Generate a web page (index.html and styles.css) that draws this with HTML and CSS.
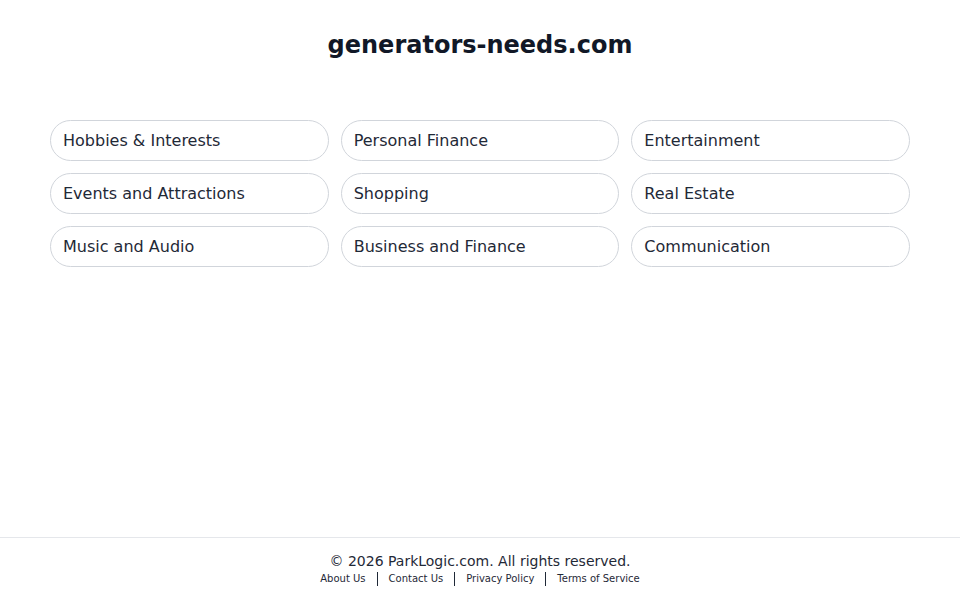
FILE: index.html
```html
<!DOCTYPE html>
<html lang="en">
<head>
    <meta charset="UTF-8">
    <meta name="viewport" content="width=device-width, initial-scale=1.0">
    <title>generators-needs.com</title>
    <link rel="stylesheet" href="styles.css">
</head>
<body>
    <div class="page">
        <main class="container">
            <h1 class="domain">generators-needs.com</h1>
            <div class="links">
                <a href="#" class="link-pill">Hobbies &amp; Interests</a>
                <a href="#" class="link-pill">Personal Finance</a>
                <a href="#" class="link-pill">Entertainment</a>
                <a href="#" class="link-pill">Events and Attractions</a>
                <a href="#" class="link-pill">Shopping</a>
                <a href="#" class="link-pill">Real Estate</a>
                <a href="#" class="link-pill">Music and Audio</a>
                <a href="#" class="link-pill">Business and Finance</a>
                <a href="#" class="link-pill">Communication</a>
            </div>
        </main>
        <footer class="footer">
            <p class="copyright">© 2026 ParkLogic.com. All rights reserved.</p>
            <nav class="footer-links">
                <a href="#">About Us</a>
                <span class="sep"></span>
                <a href="#">Contact Us</a>
                <span class="sep"></span>
                <a href="#">Privacy Policy</a>
                <span class="sep"></span>
                <a href="#">Terms of Service</a>
            </nav>
        </footer>
    </div>
</body>
</html>
```

FILE: styles.css
```css
body {
    font-family: "DejaVu Sans", Verdana, sans-serif;
    margin: 0;
    padding: 0;
    background-color: #fff;
    color: #1f2937;
}
.page {
    min-height: 100vh;
    display: flex;
    flex-direction: column;
}
.container {
    flex: 1;
    width: 860px;
    margin: 0 auto;
    padding-top: 29px;
}
.domain {
    margin: 0 0 59px;
    text-align: center;
    font-size: 24px;
    line-height: 32px;
    font-weight: bold;
    color: #111827;
}
.links {
    display: grid;
    grid-template-columns: repeat(3, 1fr);
    gap: 12px;
}
.link-pill {
    display: block;
    padding: 10px 12px;
    font-size: 16px;
    line-height: 19px;
    color: #1f2937;
    text-decoration: none;
    border: 1px solid #d1d5db;
    border-radius: 999px;
    background-color: #fff;
}
.link-pill:hover {
    background-color: #f9fafb;
}
.footer {
    border-top: 1px solid #e5e7eb;
    padding: 13px 0 14px;
    text-align: center;
}
.copyright {
    margin: 0;
    font-size: 14px;
    line-height: 20px;
    color: #1f2937;
}
.footer-links {
    display: flex;
    justify-content: center;
    align-items: center;
    font-size: 10px;
    line-height: 15px;
}
.footer-links a {
    color: #1f2937;
    text-decoration: none;
}
.sep {
    display: inline-block;
    width: 0;
    height: 14px;
    border-left: 1px solid #1f2937;
    margin: 0 11px;
}
```
